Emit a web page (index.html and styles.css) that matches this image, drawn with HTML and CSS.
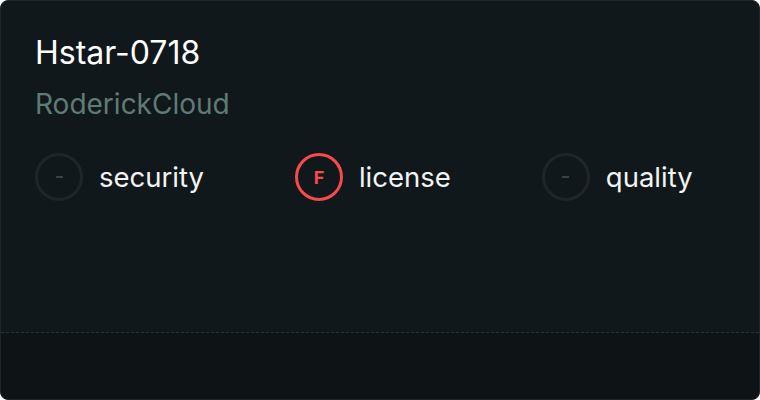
FILE: index.html
```html
<!DOCTYPE html>
<html>
<head>
<meta charset="utf-8">
<link rel="stylesheet" href="styles.css">
</head>
<body>
<div class="card">
  <div class="main">
    <div class="title">Hstar-0718</div>
    <div class="owner">RoderickCloud</div>
    <div class="scores">
      <div class="score">
        <div class="ring ring-none"><span class="dash"></span></div>
        <span class="label">security</span>
      </div>
      <div class="score">
        <div class="ring ring-f">F</div>
        <span class="label">license</span>
      </div>
      <div class="score">
        <div class="ring ring-none"><span class="dash"></span></div>
        <span class="label">quality</span>
      </div>
    </div>
  </div>
  <div class="footer"></div>
</div>
</body>
</html>
```

FILE: styles.css
```css
html, body {
  margin: 0;
  padding: 0;
  background: #ffffff;
}
.card {
  box-sizing: border-box;
  width: 760px;
  height: 400px;
  border: 1px solid #1f2528;
  border-radius: 8px;
  background: #11181b;
  overflow: hidden;
  display: flex;
  flex-direction: column;
  font-family: Inter, "Noto Sans", sans-serif;
}
.main {
  flex: 1;
  padding: 33px 34px 0;
  border-bottom: 1px dashed #2a3236;
}
.title {
  color: #ffffff;
  font-size: 32px;
  line-height: 38px;
}
.owner {
  margin-top: 15px;
  color: #5f7b75;
  font-size: 28px;
  line-height: 34px;
}
.scores {
  margin-top: 32px;
  display: flex;
  gap: 91px;
}
.score {
  display: flex;
  align-items: center;
  gap: 16px;
}
.ring {
  box-sizing: border-box;
  width: 48px;
  height: 48px;
  border-radius: 50%;
  border: 3px solid #1f2629;
  display: flex;
  align-items: center;
  justify-content: center;
}
.dash {
  width: 7px;
  height: 2px;
  background: #3a4245;
}
.ring-f {
  border-color: #f84a4a;
  color: #f84a4a;
  font-weight: 700;
  font-size: 18px;
}
.label {
  color: #f2f4f4;
  font-size: 27.5px;
  line-height: 34px;
}
.footer {
  height: 66px;
  background: #0e1316;
}
```
